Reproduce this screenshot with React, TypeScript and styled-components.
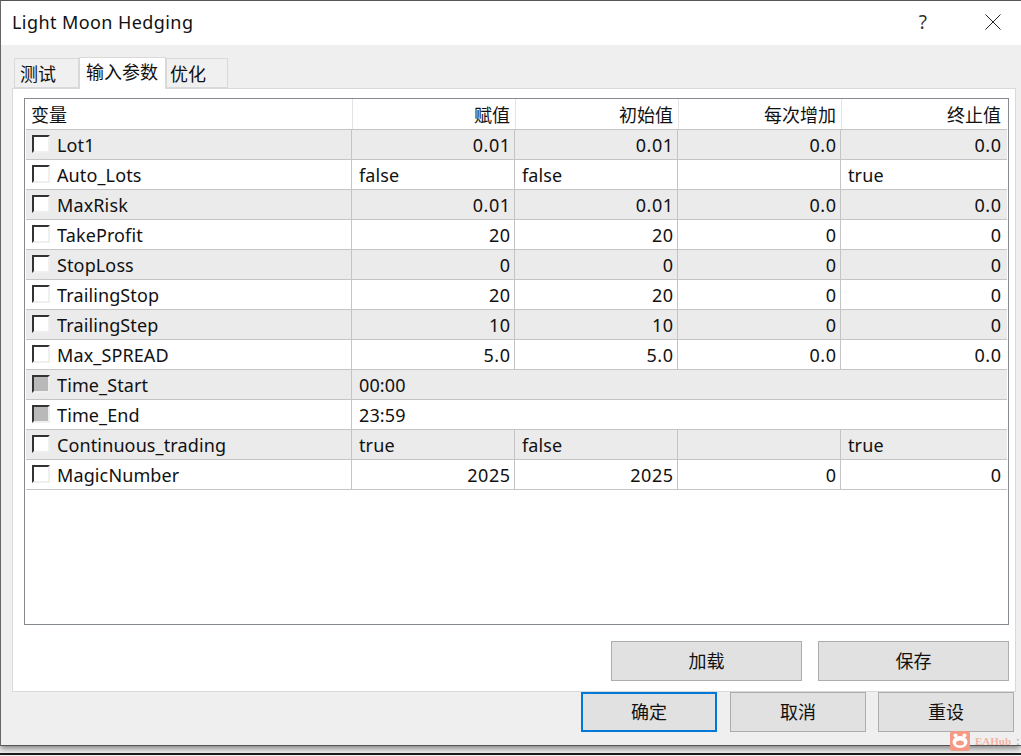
import React from "react";
import styled, { createGlobalStyle } from "styled-components";

const GlobalStyle = createGlobalStyle`
  html, body {
    margin: 0;
    padding: 0;
    background: #f4f4f4;
    overflow: hidden;
  }
  body {
    font-family: "Noto Sans", "Noto Sans CJK SC", sans-serif;
    color: #111;
  }
`;

const Page = styled.div`
  position: relative;
  width: 1021px;
  height: 756px;
  overflow: hidden;
`;

const Dialog = styled.div`
  box-sizing: border-box;
  width: 1021px;
  height: 746px;
  display: flex;
  flex-direction: column;
  background: #efefef;
  border-top: 1px solid #555;
  border-left: 1px solid #666;
  border-bottom: 1px solid #555;
  box-shadow: 0 3px 6px rgba(0, 0, 0, 0.45);
`;

const TitleBar = styled.header`
  height: 44px;
  flex: none;
  display: flex;
  align-items: center;
  background: #fff;
  padding: 0 0 2px 11px;
  box-sizing: border-box;
  font-size: 18px;
  letter-spacing: 0.42px;
`;

const Title = styled.span`
  flex: 1;
`;

const HelpMark = styled.span`
  width: 20px;
  margin-right: 52px;
  text-align: center;
  font-size: 19px;
  color: #333;
`;

const CloseIcon = styled.svg`
  width: 16px;
  height: 16px;
  margin-right: 20px;
`;

const Tabs = styled.div`
  height: 43px;
  flex: none;
  display: flex;
  align-items: flex-end;
  padding-left: 13px;
`;

const Tab = styled.div<{ $active?: boolean; $width: number }>`
  box-sizing: border-box;
  width: ${(p) => p.$width}px;
  height: ${(p) => (p.$active ? 32 : 30)}px;
  margin-bottom: ${(p) => (p.$active ? -1 : 0)}px;
  position: relative;
  z-index: ${(p) => (p.$active ? 2 : 1)};
  background: ${(p) => (p.$active ? "#fff" : "#f0f0f0")};
  border: 1px solid #d9d9d9;
  border-bottom: ${(p) => (p.$active ? "none" : "1px solid #d9d9d9")};
  padding-left: ${(p) => (p.$active ? 6 : 5)}px;
  font-size: 18px;
  line-height: ${(p) => (p.$active ? 28 : 31)}px;
`;

const LastTab = styled(Tab)`
  padding-left: 3px;
`;

const Panel = styled.section`
  box-sizing: border-box;
  margin-left: 11px;
  width: 1004px;
  height: 604px;
  flex: none;
  background: #fff;
  border: 1px solid #d9d9d9;
  padding: 9px 6px 0 11px;
  display: flex;
  flex-direction: column;
`;

const Grid = styled.div`
  box-sizing: border-box;
  height: 527px;
  flex: none;
  border: 1px solid #858a90;
  padding-left: 1px;
  padding-right: 1px;
`;

const Row = styled.div<{ $shade?: boolean; $header?: boolean }>`
  box-sizing: border-box;
  height: ${(p) => (p.$header ? 31 : 30)}px;
  display: grid;
  grid-template-columns: ${(p) => (p.$header ? "327px 163px 163px 163px 166px" : "326px 163px 163px 163px 165px")};
  align-items: stretch;
  background: ${(p) => (p.$shade ? "#ebebeb" : "#fff")};
  border-bottom: 1px solid #c4c4c4;
  font-size: 18px;
  letter-spacing: 0.12px;
`;

const Cell = styled.div<{ $right?: boolean; $wide?: boolean; $header?: boolean }>`
  box-sizing: border-box;
  display: flex;
  align-items: center;
  justify-content: ${(p) => (p.$right ? "flex-end" : "flex-start")};
  padding: ${(p) => (p.$right ? `0 ${p.$header ? 5 : 3.5}px 0 0` : "0 0 0 7px")};
  border-right: ${(p) => (p.$wide ? "none" : `1px solid ${p.$header ? "#e4e4e4" : "#c4c4c4"}`)};
  grid-column: ${(p) => (p.$wide ? "2 / -1" : "auto")};
  letter-spacing: ${(p) => (p.$header ? 0 : p.$right ? 0.5 : 0.12)}px;
  white-space: nowrap;

  &:last-child {
    border-right: none;
    padding-right: ${(p) => (p.$header ? 7 : p.$right ? 4.5 : 0)}px;
  }
`;

const NameCell = styled(Cell)`
  padding-left: 6px;
  gap: 7px;
`;

const HeaderName = styled(Cell)`
  padding-left: 5px;
`;

const Check = styled.span<{ $disabled?: boolean }>`
  box-sizing: border-box;
  width: 18px;
  height: 18px;
  margin-top: -2px;
  background: ${(p) => (p.$disabled ? "#b9b9b9" : "#fff")};
  border-style: solid;
  border-width: 2px;
  border-color: #333 #efefef #efefef #333;
`;

const LoadSaveRow = styled.div`
  display: flex;
  justify-content: flex-end;
  gap: 16px;
  margin-top: 16px;
`;

const Button = styled.button<{ $wide?: boolean; $focused?: boolean }>`
  box-sizing: border-box;
  width: ${(p) => (p.$wide ? 191 : 136)}px;
  height: 40px;
  padding: 0 0 2px;
  margin-right: ${(p) => (p.$focused ? 1 : 0)}px;
  background: #e1e1e1;
  border: ${(p) => (p.$focused ? "2px solid #0078d7" : "1px solid #adadad")};
  font-family: inherit;
  font-size: 18px;
  color: #111;
`;

const Footer = styled.div`
  display: flex;
  justify-content: flex-end;
  gap: 12px;
  padding-right: 7px;
`;

const Watermark = styled.div`
  position: absolute;
  left: 950px;
  top: 731px;
  display: flex;
  align-items: center;
  gap: 5px;
  font-family: "Liberation Serif", serif;
  font-weight: bold;
  font-size: 11px;
  color: #f5b3a4;
`;

const WatermarkDots = styled.span`
  color: #b5b5b5;
  font-family: "Liberation Sans", sans-serif;
  font-size: 11px;
`;

const BottomLine = styled.div`
  position: absolute;
  left: 0;
  right: 0;
  top: 753px;
  height: 2px;
  background: #1c1c1c;
`;

type Param = {
  name: string;
  values: string[];
  disabled?: boolean;
};

const params: Param[] = [
  { name: "Lot1", values: ["0.01", "0.01", "0.0", "0.0"] },
  { name: "Auto_Lots", values: ["false", "false", "", "true"] },
  { name: "MaxRisk", values: ["0.01", "0.01", "0.0", "0.0"] },
  { name: "TakeProfit", values: ["20", "20", "0", "0"] },
  { name: "StopLoss", values: ["0", "0", "0", "0"] },
  { name: "TrailingStop", values: ["20", "20", "0", "0"] },
  { name: "TrailingStep", values: ["10", "10", "0", "0"] },
  { name: "Max_SPREAD", values: ["5.0", "5.0", "0.0", "0.0"] },
  { name: "Time_Start", values: ["00:00"], disabled: true },
  { name: "Time_End", values: ["23:59"], disabled: true },
  { name: "Continuous_trading", values: ["true", "false", "", "true"] },
  { name: "MagicNumber", values: ["2025", "2025", "0", "0"] },
];

const isText = (v: string) => v === "" || v === "true" || v === "false";

function App() {
  return (
    <Page>
      <GlobalStyle />
      <Dialog>
        <TitleBar>
          <Title>Light Moon Hedging</Title>
          <HelpMark>?</HelpMark>
          <CloseIcon viewBox="0 0 16 16">
            <path d="M0.5 0.5L15.5 15.5M15.5 0.5L0.5 15.5" stroke="#222" strokeWidth="1" fill="none" />
          </CloseIcon>
        </TitleBar>
        <Tabs>
          <Tab $width={65}>测试</Tab>
          <Tab $width={87} $active>输入参数</Tab>
          <LastTab $width={62}>优化</LastTab>
        </Tabs>
        <Panel>
          <Grid>
            <Row $header>
              <HeaderName $header>变量</HeaderName>
              <Cell $right $header>赋值</Cell>
              <Cell $right $header>初始值</Cell>
              <Cell $right $header>每次增加</Cell>
              <Cell $right $header>终止值</Cell>
            </Row>
            {params.map((p, i) => (
              <Row key={p.name} $shade={i % 2 === 0}>
                <NameCell>
                  <Check $disabled={p.disabled} />
                  {p.name}
                </NameCell>
                {p.values.map((v, j) => (
                  <Cell key={j} $right={!isText(v) && !p.disabled} $wide={p.disabled}>
                    {v}
                  </Cell>
                ))}
              </Row>
            ))}
          </Grid>
          <LoadSaveRow>
            <Button $wide>加载</Button>
            <Button $wide>保存</Button>
          </LoadSaveRow>
        </Panel>
        <Footer>
          <Button $focused>确定</Button>
          <Button>取消</Button>
          <Button>重设</Button>
        </Footer>
      </Dialog>
      <BottomLine />
      <Watermark>
        <svg width="20" height="20" viewBox="0 0 20 20">
          <rect width="20" height="20" rx="3" fill="#f59a84" />
          <circle cx="5.5" cy="4.5" r="2" fill="#fff" />
          <circle cx="14.5" cy="4.5" r="2" fill="#fff" />
          <ellipse cx="10" cy="11" rx="7.5" ry="6" fill="#fff" />
          <ellipse cx="10" cy="12" rx="4" ry="2.5" fill="#f59a84" />
        </svg>
        EAHub
        <WatermarkDots>:</WatermarkDots>
      </Watermark>
    </Page>
  );
}

export default App;
